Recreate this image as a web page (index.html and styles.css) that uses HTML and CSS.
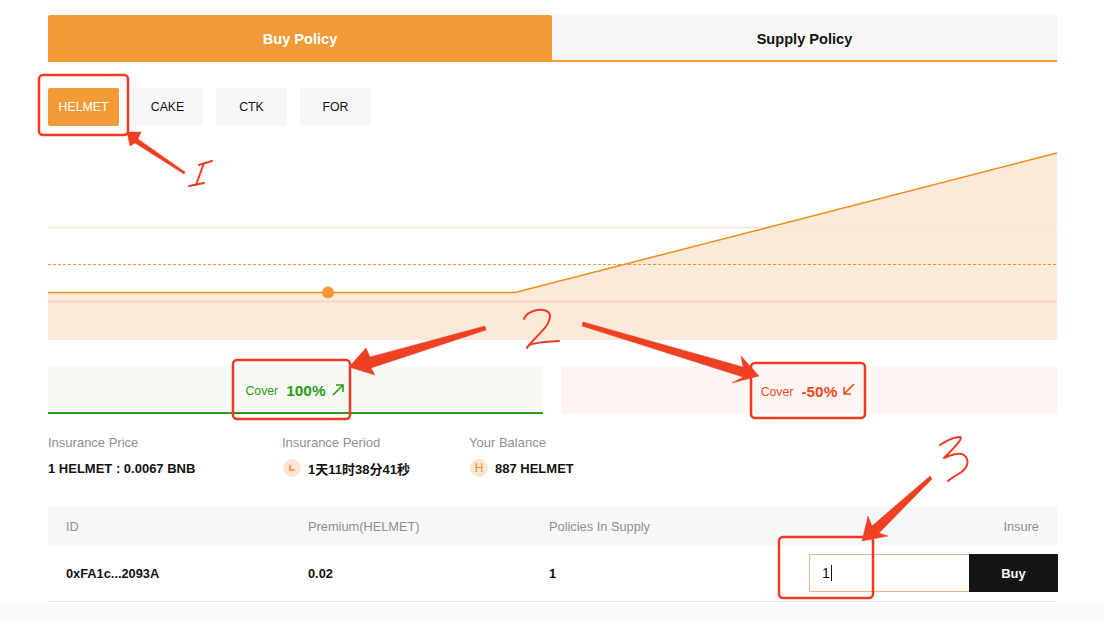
FILE: index.html
```html
<!DOCTYPE html>
<html lang="en">
<head>
<meta charset="utf-8">
<title>Buy Policy</title>
<link rel="stylesheet" href="styles.css">
</head>
<body>
<main class="page">
  <div class="tabs">
    <div class="tab tab-active">Buy Policy</div>
    <div class="tab">Supply Policy</div>
  </div>
  <div class="chips">
    <div class="chip chip-active">HELMET</div>
    <div class="chip">CAKE</div>
    <div class="chip">CTK</div>
    <div class="chip">FOR</div>
  </div>
  <svg class="chart" width="1009" height="190" viewBox="0 0 1009 190">
    <path d="M0 142.500H467L1009 3V190H0Z" fill="#fbe9d9"/>
    <path d="M0 77.500H1009" stroke="#fae3d4" stroke-width="1"/>
    <path d="M0 151.500H1009" stroke="#f8d5bd" stroke-width="1.500"/>
    <path d="M0 114.500H1009" stroke="#f39a2a" stroke-width="1" stroke-dasharray="3 2"/>
    <path d="M0 142.500H467L1009 3" fill="none" stroke="#f18c14" stroke-width="1.500"/>
    <circle cx="280" cy="142.500" r="6" fill="#f39a38"/>
  </svg>
  <div class="banners">
    <div class="banner banner-up">
      <span class="cover-label">Cover</span><span class="cover-value">100%</span>
      <svg class="cover-arrow" width="12" height="12" viewBox="0 0 12 12"><path d="M1 11L11 1M4 1H11V8" fill="none" stroke="currentColor" stroke-width="1.600"/></svg>
    </div>
    <div class="banner banner-down">
      <span class="cover-label">Cover</span><span class="cover-value">-50%</span>
      <svg class="cover-arrow" width="12" height="12" viewBox="0 0 12 12"><path d="M11 1L1 11M1 4V11H8" fill="none" stroke="currentColor" stroke-width="1.600"/></svg>
    </div>
  </div>
  <div class="info">
    <div class="info-item info-price">
      <div class="info-label">Insurance Price</div>
      <div class="info-value">1 HELMET : 0.0067 BNB</div>
    </div>
    <div class="info-item info-period">
      <div class="info-label">Insurance Period</div>
      <div class="info-value"><span class="badge"><svg width="8" height="8" viewBox="0 0 8 8"><path d="M2 1V6H7" fill="none" stroke="#f08c1e" stroke-width="1.500"/></svg></span>1天11时38分41秒</div>
    </div>
    <div class="info-item">
      <div class="info-label">Your Balance</div>
      <div class="info-value"><span class="badge badge-h">H</span>887 HELMET</div>
    </div>
  </div>
  <div class="table">
    <div class="row row-head">
      <div class="cell cell-id">ID</div>
      <div class="cell cell-premium">Premium(HELMET)</div>
      <div class="cell cell-supply">Policies In Supply</div>
      <div class="cell cell-action cell-insure">Insure</div>
    </div>
    <div class="row row-body">
      <div class="cell cell-id">0xFA1c...2093A</div>
      <div class="cell cell-premium">0.02</div>
      <div class="cell cell-supply">1</div>
      <div class="cell cell-action">
        <div class="buy-input"><span class="buy-text">1</span><span class="caret"></span></div>
        <div class="buy-btn">Buy</div>
      </div>
    </div>
  </div>
</main>
<div class="footer-strip"></div>

<svg class="annotations" width="1104" height="620" viewBox="0 0 1104 620">
  <g fill="none" stroke="#ee3a22" stroke-width="2.500">
    <rect x="39" y="75" width="89" height="60" rx="4"/>
    <rect x="233" y="360" width="117" height="59" rx="4"/>
    <rect x="751" y="363" width="114" height="55" rx="4"/>
    <rect x="779" y="537" width="94" height="61" rx="4"/>
  </g>
  <g fill="#ee4124" stroke="#ee4124" stroke-width="0.500" stroke-linejoin="round">
    <path d="M127 132L141 132L138 139L185 172L184 174L135 143L130 146Z"/>
    <path d="M349 367L366 348L370 357L485 326L486 330L371 368L375 375Z"/>
    <path d="M583 322L743 367L741 356L759 376L732 383L743 377L582 326Z"/>
    <path d="M862 541L868 516L872 526L930 476L932 479L879 533L888 536Z"/>
  </g>
  <g fill="none" stroke="#ee3a22" stroke-width="2" stroke-linecap="round" stroke-linejoin="round">
    <path d="M199 165L212 161M204 163L196 185M189 186L204 183"/>
    <path d="M524 319C526 313 535 309 543 310C552 311 551 318 547 325C540 335 530 342 527 348C527 344 537 342 559 341"/>
    <path d="M940 445C946 441 953 437 960 437C964 438 952 450 944 458C950 455 960 452 964 455C970 460 968 468 960 473C955 476 950 479 948 481"/>
  </g>
</svg>
</body>
</html>
```
FILE: styles.css
```css
* { box-sizing: border-box; }
html, body { margin: 0; padding: 0; }
body {
  width: 1104px;
  height: 620px;
  overflow: hidden;
  position: relative;
  background: #fff;
  font-family: "Liberation Sans", "Noto Sans CJK SC", sans-serif;
  color: #111;
}
.page {
  width: 1009px;
  margin-left: 48px;
  padding-top: 15px;
}
.tabs {
  display: flex;
  height: 47px;
  border-bottom: 2px solid #f39a2a;
}
.tab {
  flex: 1;
  display: flex;
  align-items: center;
  justify-content: center;
  padding-top: 2px;
  background: #f7f7f9;
  font-size: 14.600px;
  font-weight: 700;
  color: #111;
}
.tab-active {
  background: #f39a38;
  color: #fff;
  border-radius: 2px 2px 0 0;
  flex: 0 0 504px;
}
.chips {
  display: flex;
  gap: 13px;
  margin-top: 26px;
}
.chip {
  width: 71px;
  height: 38px;
  display: flex;
  align-items: center;
  justify-content: center;
  border-radius: 2px;
  background: #f7f7f9;
  font-size: 12.300px;
  color: #111;
}
.chip-active {
  background: #f39a38;
  color: #fff;
}
.chart {
  display: block;
  margin-top: 24px;
}
.banners {
  display: flex;
  gap: 18px;
  margin-top: 27px;
}
.banner {
  height: 47px;
  display: flex;
  align-items: center;
  justify-content: center;
  padding-top: 3px;
}
.banner-up {
  flex: 0 0 495px;
  background: #f6f9f4;
  border-bottom: 2px solid #2e9a15;
  color: #2a9d12;
  padding-right: 2px;
}
.banner-down {
  flex: 1;
  background: #fef5f2;
  color: #ee4a1f;
  padding-right: 2px;
}
.cover-label {
  font-size: 12.300px;
  margin-right: 8px;
}
.cover-value {
  font-size: 15.400px;
  font-weight: 700;
  margin-right: 6px;
}
.cover-arrow {
  display: block;
  margin-top: -3px;
}
.banner-down .cover-arrow { margin-top: -7px; }
.info {
  display: flex;
  margin-top: 21px;
}
.info-price { width: 234px; }
.info-period { width: 187px; }
.info-label {
  font-size: 13px;
  line-height: 16px;
  color: #8a8f99;
}
.info-value {
  display: flex;
  align-items: center;
  gap: 6px;
  height: 20px;
  margin-top: 7px;
  font-size: 13px;
  font-weight: 700;
  color: #111;
}
.info-period .info-value, .info-item:last-child .info-value { margin-left: 1px; gap: 7px; }
.badge {
  flex: none;
  width: 18px;
  height: 18px;
  border-radius: 50%;
  background: #fbe6d3;
  display: flex;
  align-items: center;
  justify-content: center;
  font-size: 12px;
  font-weight: 400;
  color: #f08c1e;
}
.table {
  margin-top: 29px;
}
.row {
  display: flex;
  align-items: center;
  padding: 0 18px;
  font-size: 12.800px;
}
.row-head {
  height: 38px;
  background: #f7f7f9;
  color: #8a8f99;
}
.row-body {
  height: 57px;
  padding-right: 0;
  border-bottom: 1px solid #e9eaec;
  font-weight: 700;
}
.cell-id { width: 242px; }
.cell-premium { width: 241px; }
.cell-supply { width: 230px; }
.cell-action {
  flex: 1;
  display: flex;
  justify-content: flex-end;
}
.cell-insure { font-weight: 400; }
.buy-input {
  width: 160px;
  height: 38px;
  display: flex;
  align-items: center;
  padding-left: 12px;
  border: 1px solid #f6b184;
  border-right: 0;
  font-weight: 400;
  font-size: 14px;
}
.caret {
  width: 1px;
  height: 16px;
  background: #111;
  margin-left: 1px;
}
.buy-btn {
  width: 89px;
  height: 38px;
  margin-right: -1px;
  display: flex;
  align-items: center;
  justify-content: center;
  background: #141414;
  color: #fff;
  font-size: 13px;
  font-weight: 700;
}
.footer-strip {
  height: 17px;
  margin-top: 2px;
  background: #fafafa;
}
.annotations {
  position: absolute;
  left: 0;
  top: 0;
  pointer-events: none;
}
```
